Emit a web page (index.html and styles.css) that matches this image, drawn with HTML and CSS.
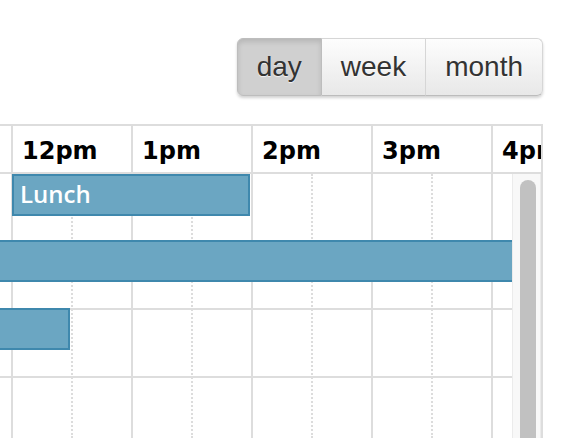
FILE: index.html
```html
<!DOCTYPE html>
<html>
<head>
<meta charset="utf-8">
<link rel="stylesheet" href="styles.css">
</head>
<body>
<div class="toolbar">
  <div class="btn-group">
    <button class="btn active">day</button>
    <button class="btn">week</button>
    <button class="btn">month</button>
  </div>
</div>
<div class="timeline">
  <div class="head">
    <div class="head-spacer"></div>
    <div class="head-cell">12pm</div>
    <div class="head-cell">1pm</div>
    <div class="head-cell">2pm</div>
    <div class="head-cell">3pm</div>
    <div class="head-cell">4pm</div>
  </div>
  <div class="body">
    <div class="canvas">
      <div class="slats">
        <div class="slat-spacer"></div>
        <div class="slat"></div><div class="slat half"></div>
        <div class="slat"></div><div class="slat half"></div>
        <div class="slat"></div><div class="slat half"></div>
        <div class="slat"></div><div class="slat half"></div>
        <div class="slat"></div><div class="slat half"></div>
      </div>
      <div class="row"></div>
      <div class="row"></div>
      <div class="row"></div>
      <div class="row"></div>
      <div class="event ev-lunch">Lunch</div>
      <div class="event ev-long"></div>
      <div class="event ev-short"></div>
    </div>
    <div class="scrollbar"><div class="thumb"></div></div>
  </div>
</div>
</body>
</html>
```
FILE: styles.css
```css
html, body {
  margin: 0;
  padding: 0;
  background: #fff;
}
body {
  width: 574px;
  height: 438px;
  overflow: hidden;
}
.toolbar {
  height: 124px;
  box-sizing: border-box;
  padding: 38px 31px 0 0;
  display: flex;
  justify-content: flex-end;
  align-items: flex-start;
}
.btn-group {
  display: flex;
  height: 58px;
  border-radius: 6px;
  box-shadow: 0 2px 3px rgba(0,0,0,0.18);
}
.btn {
  margin: 0;
  height: 58px;
  padding: 0 19px;
  font-family: "Liberation Sans", Arial, sans-serif;
  font-size: 28px;
  color: #333;
  text-shadow: 0 1px 1px rgba(255,255,255,0.75);
  background: linear-gradient(to bottom, #fdfdfd, #e8e8e8);
  border: 1px solid #d6d6d6;
  border-bottom-color: #bcbcbc;
  border-left-width: 0;
  box-sizing: border-box;
  cursor: pointer;
}
.btn:first-child {
  border-left-width: 1px;
  border-radius: 6px 0 0 6px;
}
.btn:last-child {
  border-radius: 0 6px 6px 0;
}
.btn.active {
  background: #d0d0d0;
  border-color: #bdbdbd;
  box-shadow: inset 0 3px 5px rgba(0,0,0,0.12);
}
.timeline {
  width: 543px;
  box-sizing: border-box;
  border-top: 2px solid #ddd;
  border-right: 2px solid #ddd;
}
.head {
  display: flex;
  height: 48px;
  box-sizing: border-box;
  border-bottom: 2px solid #ddd;
  overflow: hidden;
}
.head-spacer {
  width: 11px;
  flex-shrink: 0;
}
.head-cell {
  width: 120px;
  flex-shrink: 0;
  box-sizing: border-box;
  border-left: 2px solid #ddd;
  padding: 11px 0 0 9px;
  font-family: "DejaVu Sans", Verdana, sans-serif;
  font-weight: bold;
  font-size: 24px;
  line-height: 28px;
  color: #000;
  white-space: nowrap;
}
.body {
  display: flex;
  height: 264px;
  overflow: hidden;
}
.canvas {
  position: relative;
  flex: 1;
  overflow: hidden;
}
.slats {
  position: absolute;
  top: 0;
  left: 0;
  bottom: 0;
  display: flex;
}
.slat-spacer {
  width: 11px;
  flex-shrink: 0;
}
.slat {
  width: 60px;
  flex-shrink: 0;
  box-sizing: border-box;
  border-left: 2px solid #ddd;
}
.slat.half {
  border-left: 2px dotted #dcdcdc;
}
.row {
  position: relative;
  height: 68px;
  box-sizing: border-box;
  border-bottom: 2px solid #ddd;
}
.event {
  position: absolute;
  height: 42px;
  box-sizing: border-box;
  background: #6ba6c2;
  border: 2px solid #3f88ad;
  color: #fff;
  font-family: "Open Sans", "DejaVu Sans", sans-serif;
  font-weight: 600;
  font-size: 24px;
  line-height: 36px;
  padding-left: 6px;
  white-space: nowrap;
  overflow: hidden;
}
.ev-lunch {
  left: 12px;
  top: 0;
  width: 238px;
}
.ev-long {
  left: -10px;
  top: 66px;
  width: 540px;
}
.ev-short {
  left: -10px;
  top: 134px;
  width: 80px;
}
.scrollbar {
  width: 29px;
  flex-shrink: 0;
  box-sizing: border-box;
  background: #f8f8f8;
  border-left: 1px solid #ebebeb;
  border-right: 1px solid #ebebeb;
  padding: 6px 0 0 7px;
  overflow: hidden;
}
.thumb {
  width: 16px;
  height: 258px;
  border-radius: 8px 8px 0 0;
  background: #c1c1c1;
}
```
